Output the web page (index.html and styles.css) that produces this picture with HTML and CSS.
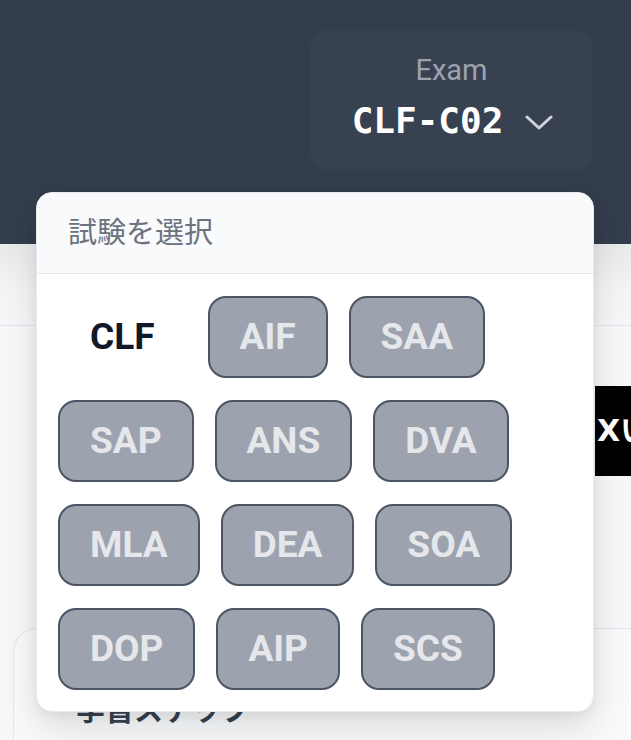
FILE: index.html
```html
<!DOCTYPE html>
<html lang="ja">
<head>
<meta charset="utf-8">
<link rel="stylesheet" href="styles.css">
</head>
<body>
<div class="page">
  <header class="topbar">
    <button class="exam-switch" type="button">
      <span class="exam-label">Exam</span>
      <span class="exam-current">
        <span class="exam-code">CLF-C02</span>
        <svg class="chev" width="28" height="15" viewBox="0 0 28 15" aria-hidden="true"><path d="M2 2 L14 13 L26 2" fill="none" stroke="#d1d5db" stroke-width="3" stroke-linecap="round" stroke-linejoin="round"/></svg>
      </span>
    </button>
  </header>
  <div class="subbar"></div>
  <main class="content">
    <div class="row-banner">
      <div class="banner">Xい</div>
    </div>
    <section class="card">
      <h2 class="card-title">学習ステップ</h2>
    </section>
  </main>

  <div class="dropdown">
    <div class="dropdown-head">試験を選択</div>
    <div class="dropdown-body">
      <button class="opt selected" type="button">CLF</button>
      <button class="opt" type="button">AIF</button>
      <button class="opt" type="button">SAA</button>
      <button class="opt" type="button">SAP</button>
      <button class="opt" type="button">ANS</button>
      <button class="opt" type="button">DVA</button>
      <button class="opt" type="button">MLA</button>
      <button class="opt" type="button">DEA</button>
      <button class="opt" type="button">SOA</button>
      <button class="opt" type="button">DOP</button>
      <button class="opt" type="button">AIP</button>
      <button class="opt" type="button">SCS</button>
    </div>
  </div>
</div>
</body>
</html>
```

FILE: styles.css
```css
* { box-sizing: border-box; }
html, body {
  margin: 0;
  padding: 0;
  width: 631px;
  height: 740px;
  overflow: hidden;
  background: #f7f8f9;
  font-family: Roboto, "Noto Sans CJK JP", sans-serif;
}
.page {
  position: relative;
  width: 631px;
  height: 740px;
  overflow: hidden;
}
.topbar {
  height: 244px;
  background: #333d4c;
  display: flex;
  justify-content: flex-end;
  align-items: flex-start;
  padding: 30px 38px 0 0;
}
.exam-switch {
  width: 283px;
  height: 140px;
  border: none;
  border-radius: 18px;
  background: #38414f;
  display: flex;
  flex-direction: column;
  align-items: center;
  padding: 20px 0 0 0;
  gap: 7px;
  font-family: inherit;
}
.exam-label {
  font-size: 29px;
  line-height: 40px;
  color: #9ca3af;
}
.exam-current {
  display: flex;
  align-items: center;
  gap: 22px;
  padding-left: 2px;
}
.exam-code {
  font-family: "DejaVu Sans Mono", monospace;
  font-weight: bold;
  font-size: 36px;
  line-height: 48px;
  color: #ffffff;
}
.chev { display: block; margin-top: 2px; }
.subbar {
  height: 82px;
  background: linear-gradient(#e9eaec, #f4f5f6 60%, #f6f7f8);
  border-bottom: 1px solid #e5e7eb;
}
.content {
  display: flex;
  flex-direction: column;
  padding-top: 60px;
}
.row-banner {
  display: flex;
  justify-content: flex-end;
}
.banner {
  width: 36px;
  height: 90px;
  background: #000;
  color: #fff;
  font-family: "DejaVu Sans", "Noto Sans CJK JP", sans-serif;
  font-weight: bold;
  font-size: 30px;
  line-height: 90px;
  padding-left: 2px;
  white-space: nowrap;
  overflow: hidden;
}
.card {
  margin: 152px 0 0 13px;
  border: 1px solid #e5e7eb;
  border-right: none;
  border-radius: 24px 0 0 0;
  background: #f9fafb;
  height: 200px;
  padding: 62px 0 0 62px;
}
.card-title {
  margin: 0;
  font-size: 29px;
  font-weight: bold;
  line-height: 40px;
  color: #374151;
}
.dropdown {
  position: absolute;
  top: 192px;
  left: 36px;
  width: 558px;
  background: #ffffff;
  border-radius: 16px;
  border: 1px solid #e8eaed;
  box-shadow: 0 16px 40px rgba(0,0,0,0.12), 0 4px 12px rgba(0,0,0,0.06);
  overflow: hidden;
}
.dropdown-head {
  height: 81px;
  background: #f9fafb;
  border-bottom: 1px solid #e5e7eb;
  padding-left: 31px;
  font-size: 29px;
  line-height: 81px;
  color: #6b7280;
}
.dropdown-body {
  display: flex;
  flex-wrap: wrap;
  gap: 22px 21px;
  padding: 22px 21px 21px 21px;
}
.opt {
  height: 82px;
  padding: 12px 30px;
  border: 2px solid #4b5563;
  border-radius: 18px;
  background: #9ca3af;
  color: #e5e7eb;
  font-family: Roboto, sans-serif;
  font-weight: bold;
  font-size: 37px;
  line-height: 54px;
}
.opt.selected {
  background: transparent;
  border-color: transparent;
  color: #111827;
}
```
